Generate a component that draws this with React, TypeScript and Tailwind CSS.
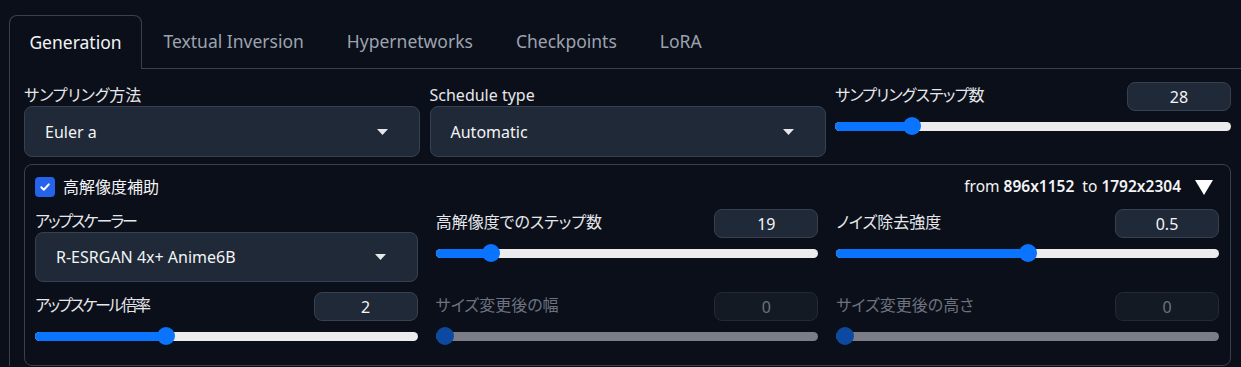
import React from "react";

const FONT = { fontFamily: '"Noto Sans", "Noto Sans CJK JP", sans-serif' };

function Caret() {
  return (
    <svg width="11" height="6" viewBox="0 0 11 6" className="shrink-0">
      <polygon points="0,0 11,0 5.5,6" fill="#e5e7eb" />
    </svg>
  );
}

function Dropdown({
  label,
  value,
  h = "h-[51px]",
  tracking = "",
}: {
  label: string;
  value: string;
  h?: string;
  tracking?: string;
}) {
  return (
    <div className="flex flex-col">
      <div className={`h-[24px] pt-[2px] text-[16px] leading-[22px] text-[#e5e7eb] ${tracking}`}>{label}</div>
      <div
        className={`${h} flex items-center justify-between rounded-lg border border-[#374151] bg-[#1f2937] pl-[20px] pr-[31px] text-[16px] text-[#f3f4f6]`}
      >
        <span>{value}</span>
        <Caret />
      </div>
    </div>
  );
}

function Slider({
  label,
  value,
  frac,
  disabled = false,
  tracking = "",
}: {
  label: string;
  value: string;
  frac: number;
  disabled?: boolean;
  tracking?: string;
}) {
  return (
    <div className="flex flex-col">
      <div className="flex items-start justify-between">
        <span
          className={`mt-[2px] text-[16px] leading-[22px] ${tracking} ${disabled ? "text-[#6b7280]" : "text-[#e5e7eb]"}`}
        >
          {label}
        </span>
        <div
          className={`flex h-[29px] w-[104px] items-center justify-center rounded-lg border text-[16px] ${
            disabled
              ? "border-[#232a35] bg-[#141a24] text-[#6b7280]"
              : "border-[#374151] bg-[#1f2937] text-[#f3f4f6]"
          }`}
        >
          {value}
        </div>
      </div>
      <div className="relative mt-[6px] h-[18px]">
        <div
          className={`absolute left-0 right-0 top-[5px] h-[9px] rounded-full ${
            disabled ? "bg-[#7b7e86]" : "bg-[#ececec]"
          }`}
        />
        <div
          className={`absolute left-0 top-[5px] h-[9px] rounded-full ${disabled ? "bg-[#0b4aa0]" : "bg-[#0a74ff]"}`}
          style={{ width: `calc(9px + ${frac} * (100% - 18px))` }}
        />
        <div
          className={`absolute top-0 h-[18px] w-[18px] rounded-full ${disabled ? "bg-[#0b4aa0]" : "bg-[#0a74ff]"}`}
          style={{ left: `calc(${frac} * (100% - 18px))` }}
        />
      </div>
    </div>
  );
}

export default function App() {
  const tabs = ["Textual Inversion", "Hypernetworks", "Checkpoints", "LoRA"];
  return (
    <div
      className="h-[367px] w-full overflow-hidden bg-[#0b0f19] [font-feature-settings:'palt']"
      style={FONT}
    >
      <div className="pl-[9px] pt-[15px]">
        {/* tab bar */}
        <div className="flex items-end">
          <div className="flex h-[54px] w-[133px] items-center justify-center rounded-t-lg border border-b-0 border-[#374151] text-[17.5px] text-[#f3f4f6]">
            Generation
          </div>
          <div className="flex h-[54px] flex-1 items-center border-b border-[#374151]">
            {tabs.map((t) => (
              <div key={t} className="px-[21.5px] text-[17.5px] text-[#9ca3af]">
                {t}
              </div>
            ))}
          </div>
        </div>
        {/* panel */}
        <div className="border-l border-[#374151] pl-[14px] pr-[10px] pt-[13px]">
          <div className="grid grid-cols-3 gap-x-[9.5px]">
            <Dropdown label="サンプリング方法" value="Euler a" />
            <Dropdown label="Schedule type" value="Automatic" />
            <Slider label="サンプリングステップ数" value="28" frac={27 / 149} tracking="tracking-[-0.8px]" />
          </div>
          <div className="mt-[7px] h-[202px] rounded-lg border border-[#374151] pl-[10px] pr-[11px] pt-[10px]">
            <div className="flex items-center justify-between">
              <div className="flex items-center gap-[8px]">
                <div className="flex h-[20px] w-[20px] items-center justify-center rounded-[4px] bg-[#2563eb]">
                  <svg width="12" height="12" viewBox="0 0 12 12">
                    <path d="M2.3 6.3 L4.8 8.7 L9.8 3.4" stroke="white" strokeWidth="2" fill="none" strokeLinecap="round" strokeLinejoin="round" />
                  </svg>
                </div>
                <span className="text-[16px] text-[#f3f4f6]">高解像度補助</span>
              </div>
              <div className="flex items-center pr-[6px]">
                <span className="text-[15.5px] text-[#f3f4f6]">
                  from <span className="font-semibold">896x1152</span>&nbsp; to <span className="font-semibold">1792x2304</span>
                </span>
                <svg width="18" height="15" viewBox="0 0 18 15" className="ml-[14px]">
                  <polygon points="0,0 18,0 9,15" fill="#ffffff" />
                </svg>
              </div>
            </div>
            <div className="mt-[10px] grid grid-cols-3 gap-x-[18px] gap-y-[10px]">
              <div className="-mt-[1px]">
                <Dropdown
                  label="アップスケーラー"
                  value="R-ESRGAN 4x+ Anime6B"
                  h="h-[50px]"
                  tracking="tracking-[-2px]"
                />
              </div>
              <Slider label="高解像度でのステップ数" value="19" frac={19 / 150} />
              <Slider label="ノイズ除去強度" value="0.5" frac={0.5} />
              <Slider label="アップスケール倍率" value="2" frac={1 / 3} tracking="tracking-[-2.3px]" />
              <Slider label="サイズ変更後の幅" value="0" frac={0} disabled />
              <Slider label="サイズ変更後の高さ" value="0" frac={0} disabled />
            </div>
          </div>
        </div>
      </div>
    </div>
  );
}
